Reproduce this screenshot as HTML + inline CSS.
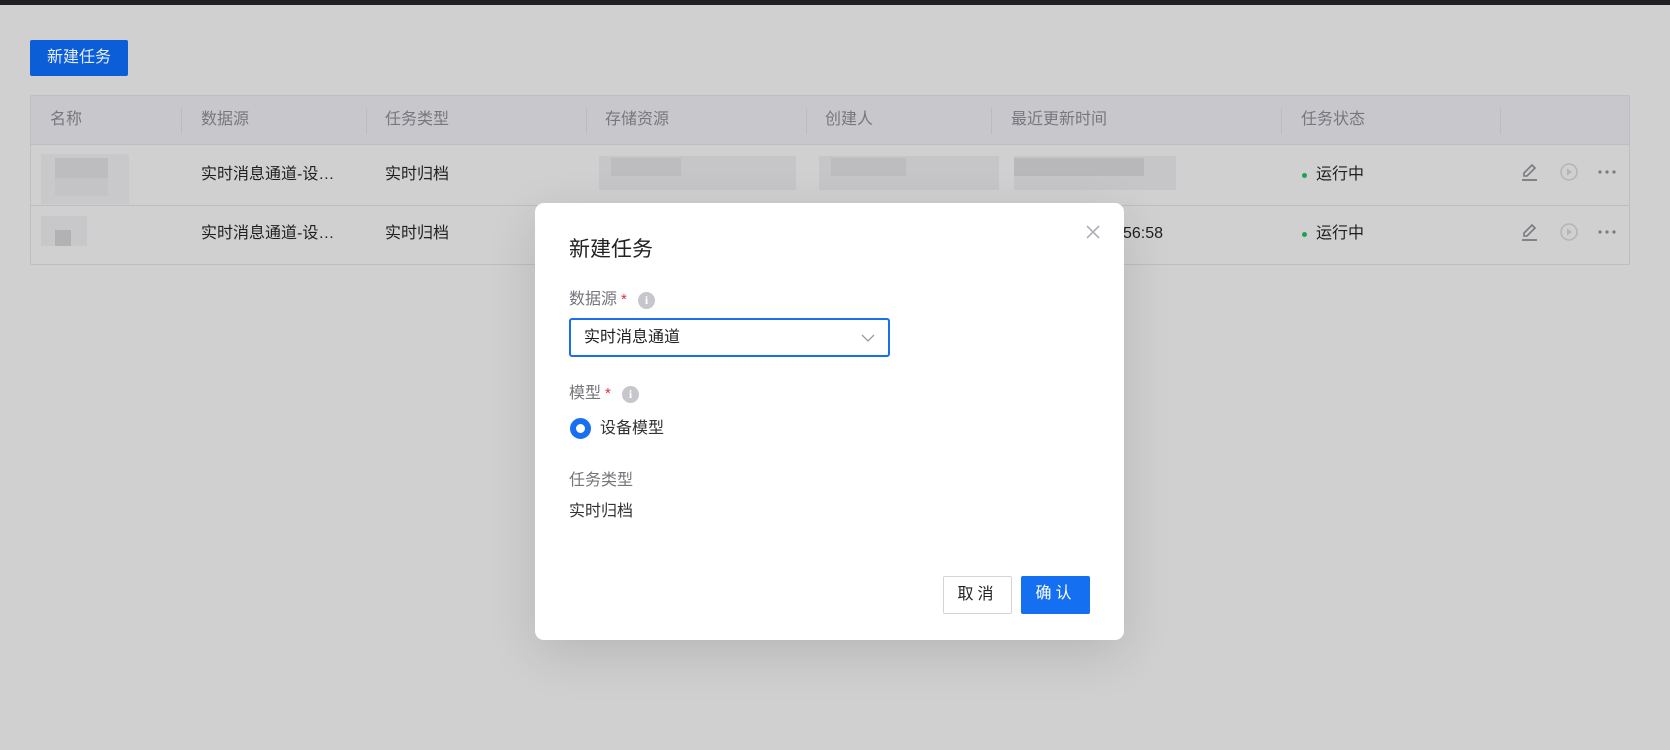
<!DOCTYPE html>
<html><head><meta charset="utf-8"><style>
*{margin:0;padding:0;box-sizing:border-box}
body{width:1670px;height:750px;overflow:hidden;background:#d0d0d0;font-family:"Liberation Sans","Noto Sans CJK SC",sans-serif;position:relative;color:#1f1f1f}
.a{position:absolute}
.topbar{left:0;top:0;width:1670px;height:5px;background:#1f1f24}
.btn{left:30px;top:40px;width:98px;height:36px;background:#0b5ed7;color:#e8eefc;font-size:16px;line-height:36px;text-align:center;border-radius:2px}
.table{left:30px;top:95px;width:1600px;height:170px;border:1px solid #bdbdc2;border-radius:2px;overflow:hidden}
.hd{left:0;top:0;width:100%;height:49px;background:#c8c8cc;border-bottom:1px solid #bcbcc1}
.r2{left:0;top:109px;width:100%;height:1px;background:#bdbdc2}
.t{font-size:16px;line-height:20px;white-space:nowrap}
.h{color:#77777d}
.sep{width:1px;height:26px;background:#bbbbc0;top:12px}
.g{background:#bdbdbf}
.dot{width:5px;height:5px;border-radius:50%;background:#1aa35a}
.modal{left:535px;top:203px;width:589px;height:437px;background:#fff;border-radius:9px;box-shadow:0 14px 50px rgba(0,0,0,.12)}
.lbl{color:#75757b}
.star{color:#e0303a;font-size:15px}
.info{width:17px;height:17px;border-radius:50%;background:#c6c6cc;color:#fff;font-size:12px;font-weight:bold;text-align:center;line-height:17px;font-family:"Liberation Serif",serif}
.sel{left:34px;top:115px;width:321px;height:39px;border:2px solid #1a6ff0;border-radius:3px}
.radio{left:35px;top:215px;width:21px;height:21px;border-radius:50%;border:6px solid #1a6ff0;background:#fff}
.b{height:38px;line-height:36px;text-align:center;font-size:16px;letter-spacing:4px;border-radius:2px}
</style></head><body>
<div class="a topbar"></div>
<div class="a btn">新建任务</div>

<div class="a table">
  <div class="a hd"></div>
  <div class="a r2"></div>
  <div class="a t h" style="left:19px;top:14px">名称</div>
  <div class="a sep" style="left:150px"></div>
  <div class="a t h" style="left:170px;top:14px">数据源</div>
  <div class="a sep" style="left:335px"></div>
  <div class="a t h" style="left:354px;top:14px">任务类型</div>
  <div class="a sep" style="left:555px"></div>
  <div class="a t h" style="left:574px;top:14px">存储资源</div>
  <div class="a sep" style="left:775px"></div>
  <div class="a t h" style="left:794px;top:14px">创建人</div>
  <div class="a sep" style="left:960px"></div>
  <div class="a t h" style="left:980px;top:14px">最近更新时间</div>
  <div class="a sep" style="left:1250px"></div>
  <div class="a t h" style="left:1270px;top:14px">任务状态</div>
  <div class="a sep" style="left:1469px"></div>

  <div class="a" style="left:10px;top:58px;width:88px;height:50px;background:#c9c9cc"></div>
  <div class="a g" style="left:24px;top:62px;width:53px;height:20px"></div>
  <div class="a" style="left:24px;top:82px;width:53px;height:18px;background:#c4c4c7"></div>
  <div class="a t" style="left:170px;top:69px">实时消息通道-设…</div>
  <div class="a t" style="left:354px;top:69px">实时归档</div>
  <div class="a" style="left:568px;top:60px;width:197px;height:34px;background:#c6c6c9"></div>
  <div class="a g" style="left:580px;top:62px;width:70px;height:18px"></div>
  <div class="a" style="left:788px;top:60px;width:180px;height:34px;background:#c6c6c9"></div>
  <div class="a g" style="left:800px;top:62px;width:75px;height:18px"></div>
  <div class="a" style="left:983px;top:60px;width:162px;height:34px;background:#c6c6c9"></div>
  <div class="a g" style="left:983px;top:62px;width:130px;height:18px;background:#b8b8bb"></div>
  <div class="a dot" style="left:1271px;top:77px"></div>
  <div class="a t" style="left:1285px;top:69px">运行中</div>
  <div class="a" style="left:10px;top:120px;width:46px;height:30px;background:#c8c8cb"></div>
  <div class="a g" style="left:24px;top:134px;width:16px;height:16px;background:#b2b2b5"></div>
  <div class="a t" style="left:170px;top:128px">实时消息通道-设…</div>
  <div class="a t" style="left:354px;top:128px">实时归档</div>
  <div class="a t" style="left:1092px;top:128px">56:58</div>
  <div class="a dot" style="left:1271px;top:136px"></div>
  <div class="a t" style="left:1285px;top:128px">运行中</div>
  <svg class="a" style="left:1489px;top:66px" width="20" height="20" viewBox="0 0 20 20"><path d="M4 14 L4 11 L12 3 L15 6 L7 14 Z" fill="none" stroke="#7a7a80" stroke-width="1.6"/><path d="M2 18 H17" stroke="#7a7a80" stroke-width="1.8"/></svg>
  <svg class="a" style="left:1528px;top:66px" width="20" height="20" viewBox="0 0 20 20"><circle cx="10" cy="10" r="8" fill="none" stroke="#b4b4b8" stroke-width="1.5"/><path d="M8 6.5 L13 10 L8 13.5Z" fill="#b4b4b8"/></svg>
  <svg class="a" style="left:1566px;top:71px" width="20" height="10" viewBox="0 0 20 10"><circle cx="3" cy="5" r="1.6" fill="#7a7a80"/><circle cx="10" cy="5" r="1.6" fill="#7a7a80"/><circle cx="17" cy="5" r="1.6" fill="#7a7a80"/></svg>
  <svg class="a" style="left:1489px;top:126px" width="20" height="20" viewBox="0 0 20 20"><path d="M4 14 L4 11 L12 3 L15 6 L7 14 Z" fill="none" stroke="#7a7a80" stroke-width="1.6"/><path d="M2 18 H17" stroke="#7a7a80" stroke-width="1.8"/></svg>
  <svg class="a" style="left:1528px;top:126px" width="20" height="20" viewBox="0 0 20 20"><circle cx="10" cy="10" r="8" fill="none" stroke="#b4b4b8" stroke-width="1.5"/><path d="M8 6.5 L13 10 L8 13.5Z" fill="#b4b4b8"/></svg>
  <svg class="a" style="left:1566px;top:131px" width="20" height="10" viewBox="0 0 20 10"><circle cx="3" cy="5" r="1.6" fill="#7a7a80"/><circle cx="10" cy="5" r="1.6" fill="#7a7a80"/><circle cx="17" cy="5" r="1.6" fill="#7a7a80"/></svg>
</div>

<div class="a modal">
  <div class="a t" style="left:34px;top:34px;font-size:21px;line-height:26px;color:#222">新建任务</div>
  <svg class="a" style="left:551px;top:22px" width="14" height="14" viewBox="0 0 14 14"><path d="M1 1 L13 13 M13 1 L1 13" stroke="#b0b0b6" stroke-width="1.6"/></svg>
  <div class="a t lbl" style="left:34px;top:87px">数据源</div>
  <div class="a star" style="left:86px;top:88px">*</div>
  <div class="a info" style="left:103px;top:89px">i</div>
  <div class="a sel"></div>
  <div class="a t" style="left:49px;top:125px;color:#222">实时消息通道</div>
  <svg class="a" style="left:326px;top:130px" width="14" height="10" viewBox="0 0 14 10"><path d="M1 2 L7 8 L13 2" fill="none" stroke="#9a9aa0" stroke-width="1.3"/></svg>
  <div class="a t lbl" style="left:34px;top:181px">模型</div>
  <div class="a star" style="left:70px;top:182px">*</div>
  <div class="a info" style="left:87px;top:183px">i</div>
  <div class="a radio"></div>
  <div class="a t" style="left:65px;top:216px;color:#333">设备模型</div>
  <div class="a t lbl" style="left:34px;top:268px">任务类型</div>
  <div class="a t" style="left:34px;top:299px;color:#333">实时归档</div>
  <div class="a b" style="left:408px;top:373px;width:69px;border:1px solid #d4d4d8;color:#222">取消</div>
  <div class="a b" style="left:486px;top:373px;width:69px;background:#1470f0;color:#fff">确认</div>
</div>
</body></html>
